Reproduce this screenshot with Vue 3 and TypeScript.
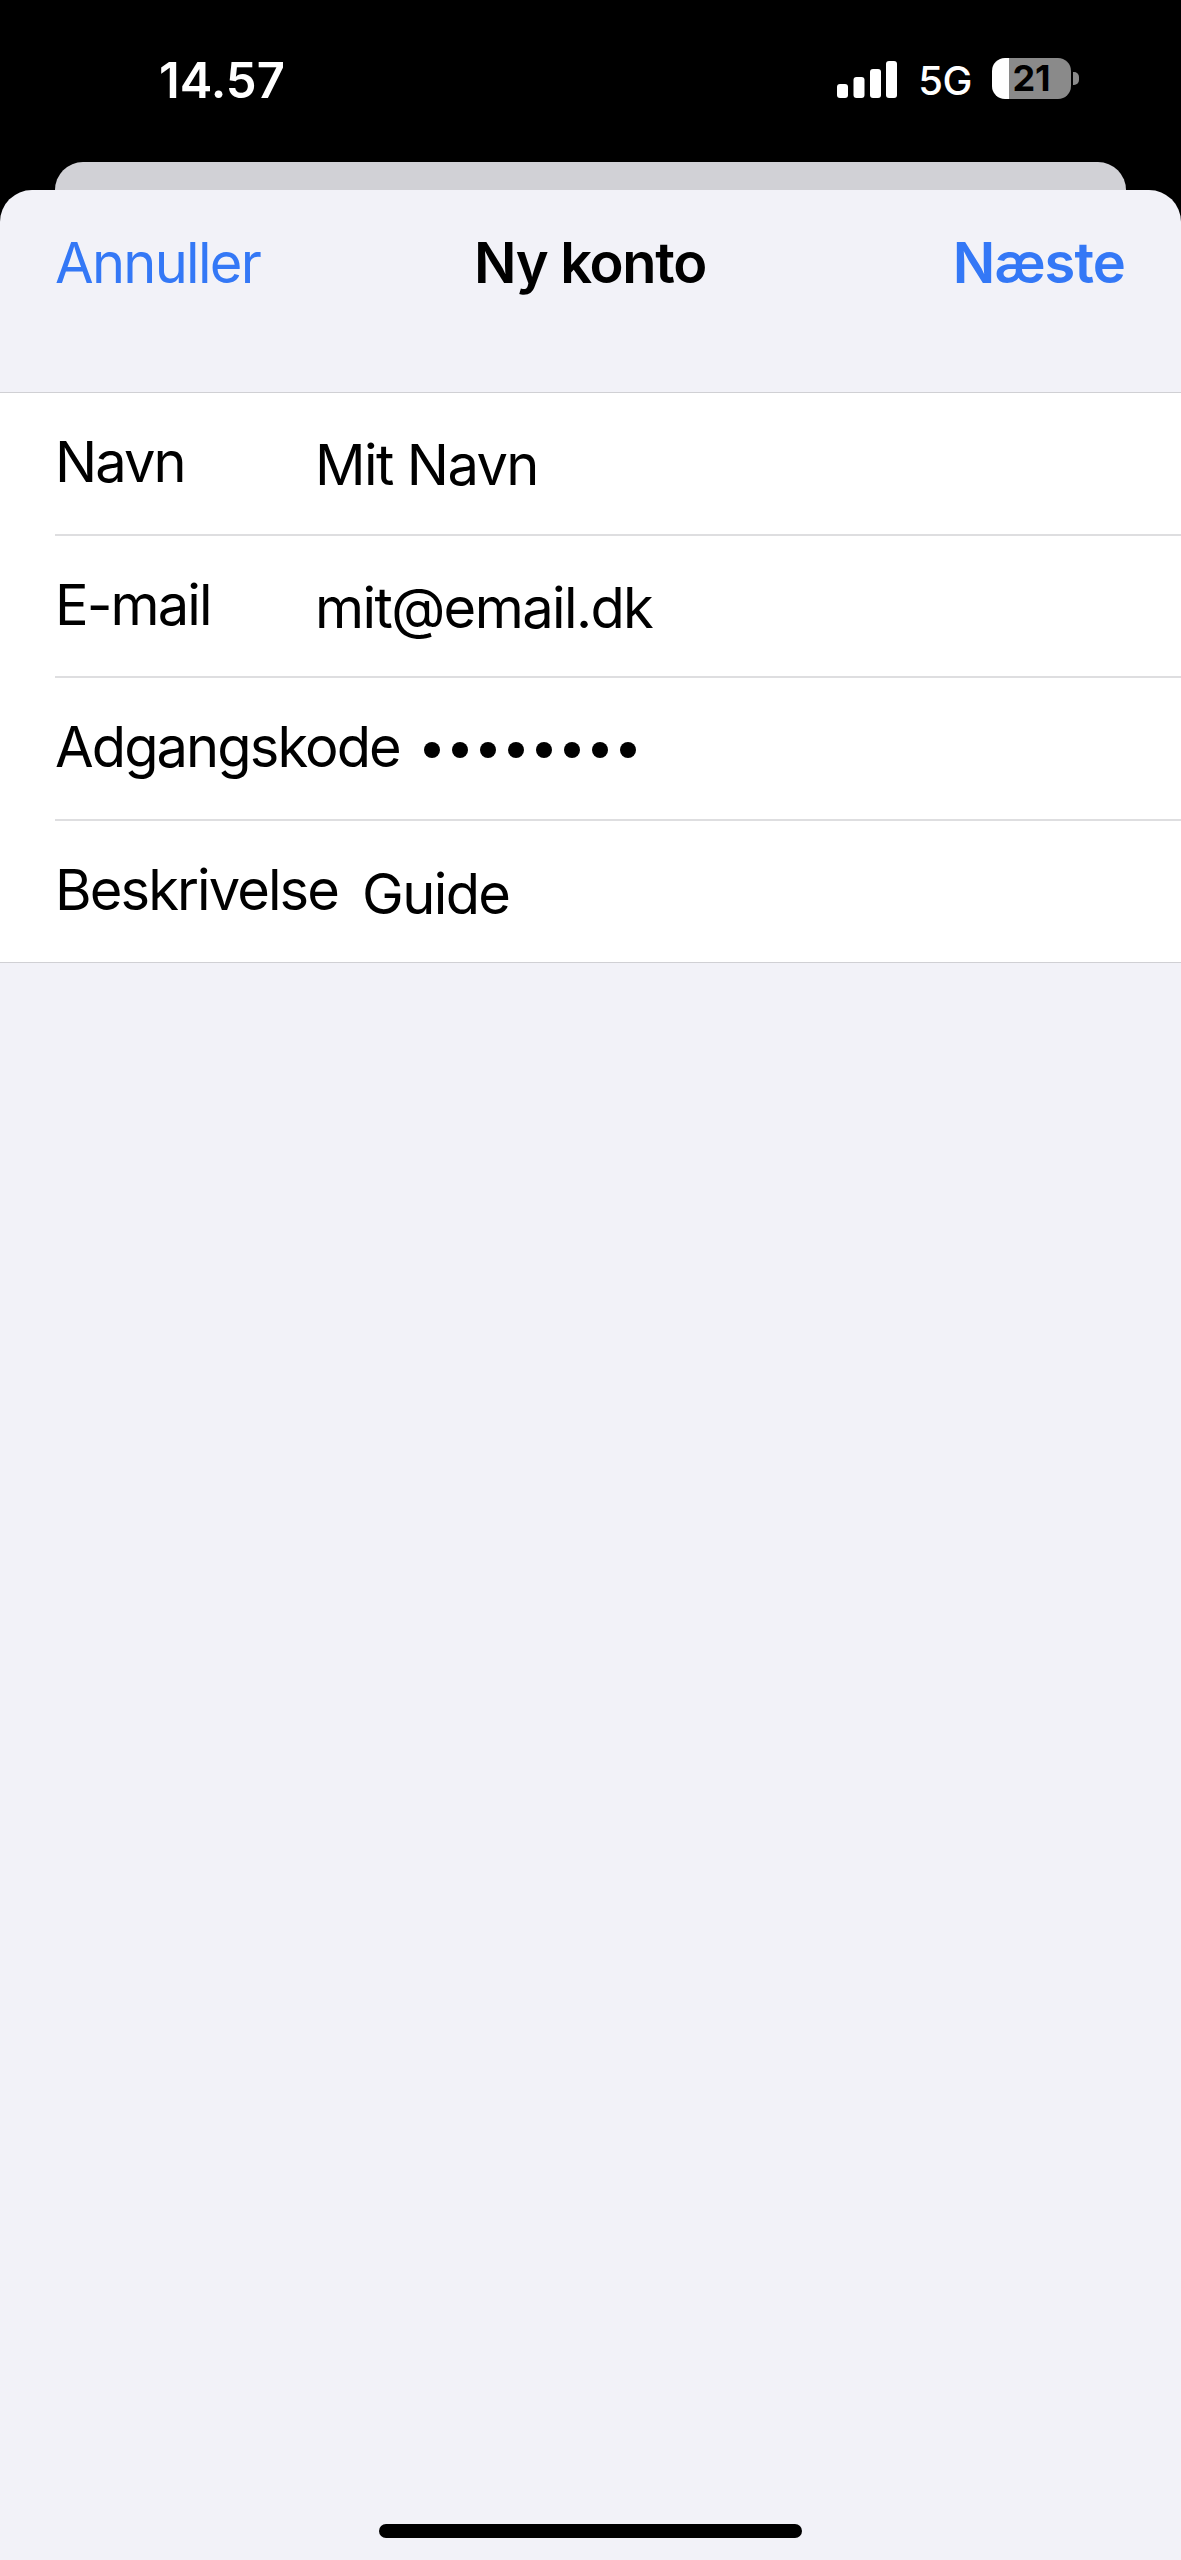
<template>
  <div class="screen">
    <div class="status-bar">
      <span class="time">14.57</span>
      <div class="status-right">
        <svg class="signal" width="60" height="37" viewBox="0 0 60 37" fill="#fff">
          <rect x="0" y="23" width="11" height="14" rx="3" />
          <rect x="16.5" y="16" width="11" height="21" rx="3" />
          <rect x="33" y="8" width="11" height="29" rx="3" />
          <rect x="49" y="0" width="11" height="37" rx="3" />
        </svg>
        <span class="network">5G</span>
        <div class="battery">
          <div class="battery-body">{{ battery }}</div>
          <div class="battery-nub"></div>
        </div>
      </div>
    </div>

    <div class="back-card"></div>

    <div class="sheet">
      <div class="nav">
        <span class="nav-btn">Annuller</span>
        <span class="nav-title">Ny konto</span>
        <span class="nav-btn strong">Næste</span>
      </div>

      <div class="form">
        <div v-for="row in rows" :key="row.label" class="row">
          <span class="label">{{ row.label }}</span>
          <span v-if="row.secret" class="dots">
            <i v-for="n in row.value.length" :key="n" class="dot"></i>
          </span>
          <span v-else class="value">{{ row.value }}</span>
        </div>
      </div>
    </div>

    <div class="home-indicator"></div>
  </div>
</template>

<script setup lang="ts">
interface Row {
  label: string;
  value: string;
  secret?: boolean;
}

const battery = 21;

const rows: Row[] = [
  { label: 'Navn', value: 'Mit Navn' },
  { label: 'E-mail', value: 'mit@email.dk' },
  { label: 'Adgangskode', value: 'password', secret: true },
  { label: 'Beskrivelse', value: 'Guide' }
];
</script>

<style>
html,
body {
  margin: 0;
  background: #000;
}
</style>

<style scoped>
.screen {
  position: relative;
  width: 1181px;
  height: 2560px;
  display: flex;
  flex-direction: column;
  background: #000;
  overflow: hidden;
  font-family: Inter, "Liberation Sans", sans-serif;
  color: #000;
}

.status-bar {
  height: 162px;
  flex-shrink: 0;
  display: flex;
  justify-content: space-between;
  align-items: flex-start;
  padding: 0 102px 0 159px;
  box-sizing: border-box;
  color: #fff;
}

.time {
  margin-top: 52px;
  font-size: 49px;
  line-height: 57px;
  font-weight: 600;
}

.status-right {
  display: flex;
  align-items: flex-start;
  padding-top: 58px;
}

.signal {
  margin-top: 3px;
}

.network {
  margin: 0 20px 0 21px;
  font-size: 40px;
  line-height: 45px;
  font-weight: 500;
  letter-spacing: -0.5px;
}

.battery {
  display: flex;
  align-items: center;
}

.battery-body {
  width: 79px;
  height: 41px;
  border-radius: 13px;
  background: linear-gradient(90deg, #fff 0 17px, #8a8a8a 17px);
  color: #000;
  font-size: 36px;
  font-weight: 700;
  line-height: 41px;
  text-align: center;
}

.battery-nub {
  width: 6px;
  height: 13px;
  margin-left: 2px;
  border-radius: 0 5px 5px 0;
  background: #8a8a8a;
}

.back-card {
  flex-shrink: 0;
  height: 28px;
  margin: 0 55px;
  border-radius: 28px 28px 0 0;
  background: #d1d1d6;
}

.sheet {
  flex: 1;
  border-radius: 32px 32px 0 0;
  background: #f2f2f8;
}

.nav {
  height: 202px;
  padding: 39px 56px 0 55px;
  box-sizing: border-box;
  display: grid;
  grid-template-columns: 1fr auto 1fr;
  align-items: start;
  font-size: 56px;
  line-height: 68px;
}

.nav-btn {
  color: #3478f6;
  letter-spacing: -1.7px;
}

.nav-btn.strong {
  font-weight: 600;
  letter-spacing: -0.9px;
  text-align: right;
}

.nav-title {
  font-weight: 600;
  letter-spacing: -1.3px;
  color: #000;
}

.form {
  background: #fff;
  border-top: 1px solid #d0d0d4;
  border-bottom: 1px solid #d0d0d4;
  padding-left: 55px;
}

.row {
  height: 142.7px;
  box-sizing: border-box;
  display: flex;
  align-items: center;
  gap: 24px;
  border-bottom: 2px solid #dedee0;
  font-size: 56px;
  letter-spacing: -1.6px;
}

.row:last-child {
  height: 141px;
  border-bottom: 0;
}

.label {
  min-width: 236px;
  margin-top: -3px;
  letter-spacing: -1.9px;
}

.value {
  margin-top: 4px;
}

.dots {
  display: flex;
  gap: 12px;
  margin-top: 2px;
}

.dot {
  width: 16px;
  height: 16px;
  border-radius: 50%;
  background: #000;
}

.home-indicator {
  position: absolute;
  left: 379px;
  bottom: 22px;
  width: 423px;
  height: 14px;
  border-radius: 7px;
  background: #000;
}
</style>
